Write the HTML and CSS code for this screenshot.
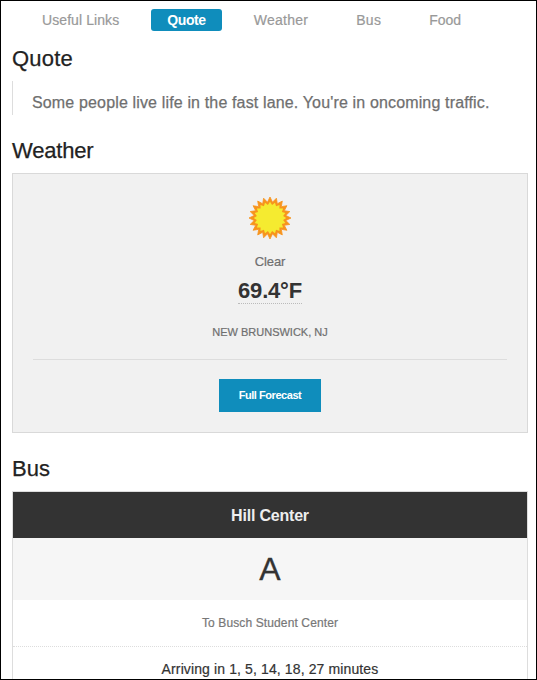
FILE: index.html
```html
<!DOCTYPE html>
<html lang="en">
<head>
<meta charset="utf-8">
<title>Dashboard</title>
<link rel="stylesheet" href="styles.css">
</head>
<body>
<nav class="sub-nav">
  <a class="link links">Useful Links</a>
  <a class="link active">Quote</a>
  <a class="link weather-link">Weather</a>
  <a class="link bus-link">Bus</a>
  <a class="link food-link">Food</a>
</nav>
<main>
  <h4 class="title t-quote">Quote</h4>
  <blockquote class="quote">Some people live life in the fast lane. You're in oncoming traffic.</blockquote>
  <h4 class="title t-weather">Weather</h4>
  <section class="panel">
    <svg class="sun" viewBox="-21 -21 42 42">
      <path fill="#f7941d" stroke="#f7941d" stroke-width=".8" d="M0 -21L2.5 -15.8L6.4 -19.8L7.3 -14.3L12.3 -16.9L11.3 -11.3L16.9 -12.3L14.3 -7.3L19.8 -6.4L15.8 -2.5L21 0L15.8 2.5L19.8 6.4L14.3 7.3L16.9 12.3L11.3 11.3L12.3 16.9L7.3 14.3L6.4 19.8L2.5 15.8L0 21L-2.5 15.8L-6.4 19.8L-7.3 14.3L-12.3 16.9L-11.3 11.3L-16.9 12.3L-14.3 7.3L-19.8 6.4L-15.8 2.5L-21 0L-15.8 -2.5L-19.8 -6.4L-14.3 -7.3L-16.9 -12.3L-11.3 -11.3L-12.3 -16.9L-7.3 -14.3L-6.4 -19.8L-2.5 -15.8Z"/>
      <path fill="#f5eb30" transform="scale(.83)" d="M0 -19.5L2.5 -15.8L6 -18.5L7.3 -14.3L11.5 -15.8L11.3 -11.3L15.8 -11.5L14.3 -7.3L18.5 -6L15.8 -2.5L19.5 0L15.8 2.5L18.5 6L14.3 7.3L15.8 11.5L11.3 11.3L11.5 15.8L7.3 14.3L6 18.5L2.5 15.8L0 19.5L-2.5 15.8L-6 18.5L-7.3 14.3L-11.5 15.8L-11.3 11.3L-15.8 11.5L-14.3 7.3L-18.5 6L-15.8 2.5L-19.5 0L-15.8 -2.5L-18.5 -6L-14.3 -7.3L-15.8 -11.5L-11.3 -11.3L-11.5 -15.8L-7.3 -14.3L-6 -18.5L-2.5 -15.8Z"/>
    </svg>
    <p class="condition">Clear</p>
    <p class="temp"><abbr>69.4°F</abbr></p>
    <p class="place">NEW BRUNSWICK, NJ</p>
    <hr>
    <a class="button">Full Forecast</a>
  </section>
  <h4 class="title">Bus</h4>
  <ul class="table">
    <li class="stop">Hill Center</li>
    <li class="route">A</li>
    <li class="dest">To Busch Student Center</li>
    <li class="arrive">Arriving in 1, 5, 14, 18, 27 minutes</li>
  </ul>
</main>
</body>
</html>
```
FILE: styles.css
```css
* { box-sizing: border-box; margin: 0; padding: 0; }
body {
  height: 680px;
  overflow: hidden;
  border: 1px solid #000;
  background: #fff;
  color: #222;
  font-family: "Liberation Sans", Arial, sans-serif;
}
.sub-nav { display: flex; gap: 16px; padding: 8px 0 0 25px; height: 43px; }
.link { height: 22px; padding: 0 16px; line-height: 22px; font-size: 14px; color: #999; border-radius: 3px; white-space: nowrap; -webkit-text-stroke: .2px; }
.links { letter-spacing: .08px; }
.active { background: #0f8dbc; color: #fff; font-weight: bold; letter-spacing: -.38px; -webkit-text-stroke: 0; }
.weather-link { letter-spacing: .25px; }
.bus-link { letter-spacing: .3px; }
main { padding: 0 8px 0 11px; }
.title { height: 30px; line-height: 30px; font-size: 22px; font-weight: normal; white-space: nowrap; -webkit-text-stroke: .25px; }
.t-quote { letter-spacing: .2px; }
.t-weather { letter-spacing: -.2px; }
.quote { height: 34px; margin: 7px 0 21px; padding: 9px 0 0 19px; border-left: 1px solid #ddd; line-height: 26px; font-size: 16px; letter-spacing: .15px; color: #6f6f6f; white-space: nowrap; -webkit-text-stroke: .25px; }
.panel { display: flex; flex-direction: column; align-items: center; height: 260px; margin: 7px 0 21px; padding: 23px 20px 20px; border: 1px solid #d9d9d9; background: #f1f1f1; }
.sun { display: block; width: 42px; height: 42px; margin-right: 1px; overflow: visible; }
.condition { margin-top: 13px; line-height: 20px; font-size: 13px; letter-spacing: -.1px; color: #6f6f6f; -webkit-text-stroke: .2px; }
.temp { margin-top: 6px; line-height: 26px; font-size: 22px; font-weight: bold; letter-spacing: -.2px; color: #333; }
.temp abbr { display: block; height: 26px; border-bottom: 1px dotted #bbb; }
.place { margin-top: 18px; line-height: 20px; font-size: 11px; color: #6f6f6f; -webkit-text-stroke: .2px; }
hr { width: 100%; margin-top: 17px; border: 0; border-top: 1px solid #ddd; }
.button { width: 102px; height: 33px; margin-top: 19px; background: #0f8dbc; color: #fff; line-height: 33px; text-align: center; font-size: 11px; font-weight: bold; letter-spacing: -.45px; }
.table { margin-top: 7px; border: 1px solid #ddd; list-style: none; text-align: center; }
.stop { height: 46px; line-height: 47px; background: #333; color: #eee; font-size: 16px; font-weight: bold; letter-spacing: -.2px; }
.route { height: 62px; line-height: 62px; background: #f6f6f6; color: #333; font-size: 32px; -webkit-text-stroke: .3px; }
.dest { height: 47px; line-height: 46px; border-bottom: 1px dotted #ddd; color: #777; font-size: 12px; letter-spacing: .12px; -webkit-text-stroke: .2px; }
.arrive { height: 60px; line-height: 45px; color: #333; font-size: 14px; letter-spacing: .12px; -webkit-text-stroke: .2px; }
```
